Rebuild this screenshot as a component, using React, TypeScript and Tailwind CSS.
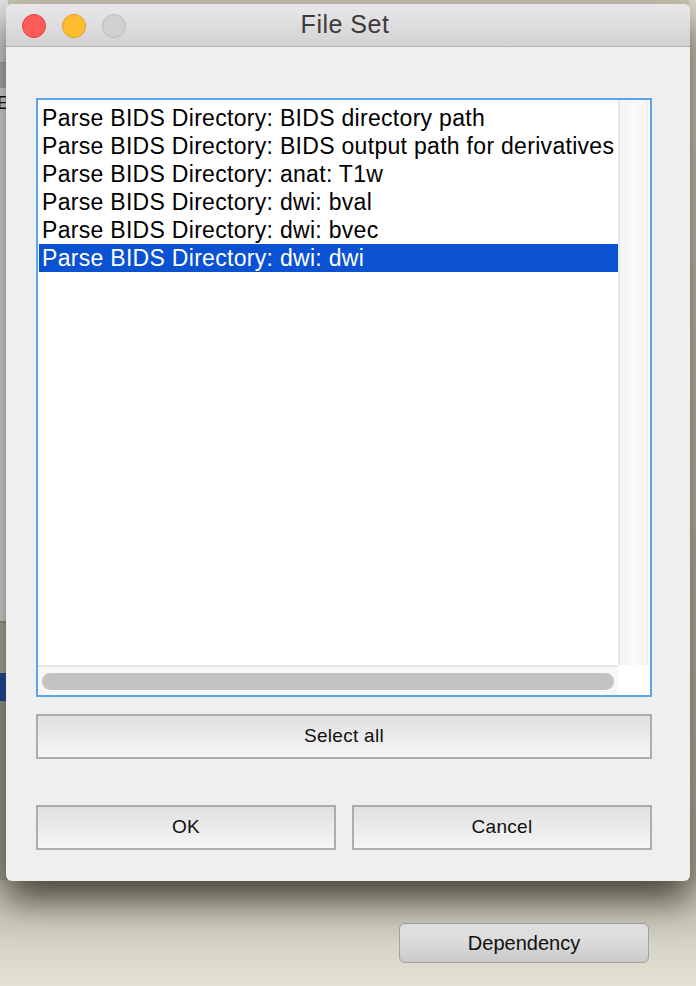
import React from "react";

const rows = [
  "Parse BIDS Directory: BIDS directory path",
  "Parse BIDS Directory: BIDS output path for derivatives",
  "Parse BIDS Directory: anat: T1w",
  "Parse BIDS Directory: dwi: bval",
  "Parse BIDS Directory: dwi: bvec",
  "Parse BIDS Directory: dwi: dwi",
];

const font = { fontFamily: '"Liberation Sans", Arial, sans-serif' };

function TrafficLight({ color, border }: { color: string; border: string }) {
  return <span className={`block h-6 w-6 rounded-full border ${color} ${border}`} />;
}

function DialogButton({ label }: { label: string }) {
  return (
    <button className="flex h-[45px] w-full items-center justify-center border-2 border-[#adadad] bg-gradient-to-b from-[#e0e0e0] to-[#f6f6f6] text-[19px] tracking-[0.3px] text-[#111]">
      {label}
    </button>
  );
}

export default function App() {
  return (
    <div
      className="relative h-[986px] w-[696px] overflow-hidden bg-gradient-to-b from-[#c9c6b6] via-[#b0ad9f] via-85% to-[#e4e2d3]"
      style={font}
    >
      {/* window behind, left edge */}
      <div className="absolute left-0 top-0 flex h-[880px] w-[8px] flex-col">
        <div className="h-[62px] bg-[#e2e2e2]" />
        <div className="h-[26px] border-t border-[#b5b5b5] bg-[#bcbcbc]" />
        <div className="relative h-[533px] bg-[#efefef]">
          <span className="absolute -left-[3px] top-[5px] text-[19px] leading-none text-black">E</span>
        </div>
        <div className="h-[52px] border-t-2 border-[#9f9f9f] bg-[#b9b6a9]" />
        <div className="h-[28px] bg-[#0a40a8]" />
        <div className="flex-1 bg-[#a29f98]" />
      </div>
      {/* right strip */}
      <div className="absolute right-0 top-0 h-[880px] w-[7px] bg-gradient-to-b from-[#d9d7c8] to-[#b7b4a6]" />

      {/* dependency button on desktop */}
      <button className="absolute left-[399px] top-[923px] flex h-[40px] w-[250px] items-center justify-center rounded-[6px] border border-[#a3a3a3] bg-gradient-to-b from-[#ebebeb] to-[#c9c9c9] text-[20px] text-[#111]">
        Dependency
      </button>

      {/* dialog window */}
      <div className="absolute left-[6px] top-[4px] flex h-[877px] w-[684px] flex-col overflow-hidden rounded-[6px] bg-[#efefef] shadow-[0_18px_36px_rgba(55,52,40,0.9)]">
        <div className="relative flex h-[43px] shrink-0 items-center justify-center border-b border-[#b3b3b3] bg-gradient-to-b from-[#e9e7e9] to-[#d3d1d3] pr-[6px]">
          <div className="absolute left-[16px] top-[10px] flex gap-4">
            <TrafficLight color="bg-[#fd5b58]" border="border-[#e0443e]" />
            <TrafficLight color="bg-[#febc2f]" border="border-[#dea123]" />
            <TrafficLight color="bg-[#d0d0d0]" border="border-[#bdbdbd]" />
          </div>
          <span className="text-[25px] tracking-[0.5px] text-[#3b3b3b]">File Set</span>
        </div>

        <div className="flex flex-1 flex-col pl-[30px] pr-[38px] pt-[51px]">
          {/* list */}
          <div className="grid h-[599px] grid-cols-[1fr_32px] grid-rows-[1fr_30px] border-2 border-[#5ba6e8] bg-white">
            <div className="overflow-hidden pl-px pt-[4px]">
              {rows.map((r, i) => (
                <div
                  key={r}
                  className={`h-[28px] whitespace-nowrap pl-[3px] text-[23px] leading-[28px] tracking-[0.3px] ${
                    i === rows.length - 1 ? "bg-[#0b52d2] text-white" : "text-black"
                  }`}
                >
                  {r}
                </div>
              ))}
            </div>
            <div className="mr-[2px] border-l-2 border-r border-l-[#e8e8e8] border-r-[#ececec] bg-gradient-to-r from-[#f4f4f4] via-[#fafafa] to-[#f4f4f4]" />
            <div className="flex items-center border-t-2 border-[#e6e6e6] bg-[#f7f7f7] px-[4px]">
              <div className="h-[17px] w-full rounded-full bg-[#c2c2c2]" />
            </div>
            <div className="bg-white" />
          </div>

          <div className="mt-[17px]">
            <DialogButton label="Select all" />
          </div>

          <div className="mt-[46px] flex gap-4">
            <DialogButton label="OK" />
            <DialogButton label="Cancel" />
          </div>
        </div>
      </div>
    </div>
  );
}
